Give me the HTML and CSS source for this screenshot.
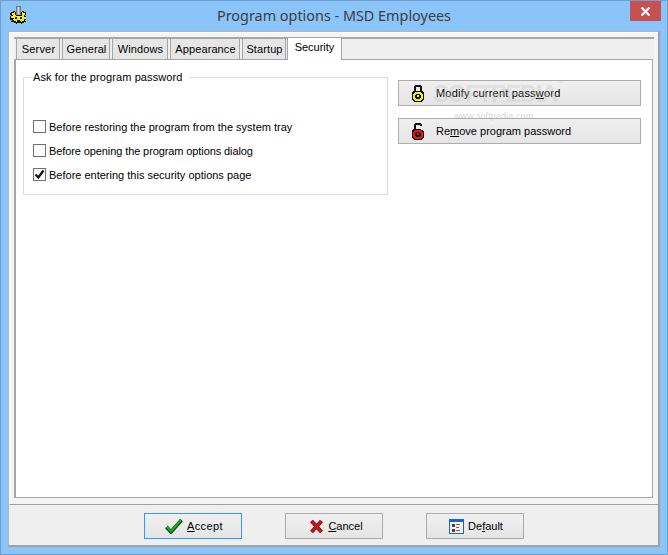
FILE: index.html
```html
<!DOCTYPE html>
<html lang="en">
<head>
<meta charset="utf-8">
<title>Program options - MSD Employees</title>
<link rel="stylesheet" href="styles.css">
</head>
<body>
<div class="window">
  <header class="titlebar">
    <svg class="app-icon" width="17" height="18" viewBox="0 0 17 18" shape-rendering="crispEdges">
      <path fill="#111" d="M1 6h2V5h2v1h1v3h5V6h1V5h2v1h2v3h-1v1h1v4h-1v1h1v1h-2v1h-2v1h-1v-1H7v1H6v-1H4v-1H1v-1h1v-1H0v-4h1V9H0V7h1z"/>
      <path fill="#f4ee16" d="M2 7h2V6h1v3l1 1h5l1-1V6h1v1h2v2h-1v2h2v2h-2v2h-2v1h-1v-1H7v1H6v-1H4v-1H3v-1h1v-1H1v-2h2V9H2z"/>
      <rect x="5" y="11" width="2" height="2" fill="#111"/>
      <rect x="10" y="11" width="2" height="2" fill="#111"/>
      <rect x="7" y="14" width="3" height="1" fill="#111"/>
      <rect x="6" y="0" width="5" height="9" fill="#6f7787"/>
      <rect x="7" y="1" width="3" height="8" fill="#a3abbb"/>
      <rect x="8" y="1" width="1" height="7" fill="#d5d9e2"/>
    </svg>
    <h1 class="title">Program options - MSD Employees</h1>
    <div class="close">
      <svg width="11" height="11" viewBox="0 0 11 11"><path d="M1.5 1.5l8 8M9.5 1.5l-8 8" stroke="#fff" stroke-width="2.2"/></svg>
    </div>
  </header>

  <div class="client">
    <div class="tabarea">
      <nav class="tabs">
        <span class="tab tab-server">Server</span>
        <span class="tab tab-general">General</span>
        <span class="tab tab-windows">Windows</span>
        <span class="tab tab-appearance">Appearance</span>
        <span class="tab tab-startup">Startup</span>
        <span class="tab tab-active">Security</span>
      </nav>
      <section class="panel">
        <fieldset class="group">
          <legend class="legend">Ask for the program password</legend>
          <label class="check"><span class="box"></span>Before restoring the program from the system tray</label>
          <label class="check check-tight"><span class="box"></span>Before opening the program options dialog</label>
          <label class="check"><span class="box">
            <svg width="11" height="11" viewBox="0 0 11 11"><path d="M1.5 5.5l2.8 3L9.5 1.5" fill="none" stroke="#111" stroke-width="2.2"/></svg>
          </span>Before entering this security options page</label>
        </fieldset>
        <div class="actions">
          <button class="btn btn-wide btn-spaced">
            <svg class="lock" width="12" height="17" viewBox="0 0 12 17" shape-rendering="crispEdges">
              <path fill="#111" d="M3 0h6v1h1v5h1v1h1v8h-1v1h-1v1H2v-1H1v-1H0V7h1V6h1V1h1z"/>
              <path fill="#efefef" d="M4 2h4v4H4z"/>
              <path fill="#f4ee16" d="M3 7h6v1h1v1h1v5h-1v1H9v1H3v-1H2v-1H1V9h1V8h1z"/>
              <path fill="#111" d="M4 9h4v1h1v3H8v1H4v-1H3v-3h1z"/>
              <path fill="#f4ee16" d="M5 10h2v2H5z"/>
            </svg>
            <span>Modify current pass<u>w</u>ord</span>
          </button>
          <button class="btn btn-wide">
            <svg class="lock" width="12" height="17" viewBox="0 0 12 17" shape-rendering="crispEdges">
              <path fill="#111" d="M3 0h6v1h1v2H8V2H4v4h5v1h2v1h1v7h-1v1h-1v1H2v-1H1v-1H0V7h1V6h1V1h1z"/>
              <path fill="#e5161a" d="M3 7h6v1h1v1h1v5h-1v1H9v1H3v-1H2v-1H1V9h1V8h1z"/>
              <path fill="#111" d="M4 9h4v1h1v3H8v1H4v-1H3v-3h1z"/>
              <path fill="#e5161a" d="M5 10h2v2H5z"/>
            </svg>
            <span>Re<u>m</u>ove program password</span>
          </button>
        </div>
        <div class="watermark">SOFTPEDIA<span class="tm">™</span></div>
        <div class="watermark-url">www.softpedia.com</div>
      </section>
    </div>
    <footer class="footer">
      <button class="btn btn-foot btn-focus btn-accept">
        <svg width="18" height="16" viewBox="0 0 18 16"><path d="M1.5 9l4.5 5L16.5 2" fill="none" stroke="#0b3c12" stroke-width="3.6"/><path d="M2 9l4 4.4L16 2" fill="none" stroke="#12b51c" stroke-width="2"/></svg>
        <span><u>A</u>ccept</span>
      </button>
      <button class="btn btn-foot btn-cancel">
        <svg width="15" height="15" viewBox="0 0 15 15"><path d="M2.5 2l10 11M12.5 2l-10 11" stroke="#8c0f10" stroke-width="4"/><path d="M2.5 2l10 11M12.5 2l-10 11" stroke="#c8181a" stroke-width="2"/></svg>
        <span><u>C</u>ancel</span>
      </button>
      <button class="btn btn-foot btn-default">
        <svg width="15" height="15" viewBox="0 0 15 15" shape-rendering="crispEdges">
          <rect x="0" y="0" width="15" height="15" fill="#1668c8"/>
          <rect x="1" y="3" width="13" height="11" fill="#f1f5fb"/>
          <rect x="3" y="5" width="3" height="3" fill="#55402f"/>
          <rect x="3" y="10" width="3" height="3" fill="#55402f"/>
          <rect x="7" y="5" width="4" height="1" fill="#d6452c"/>
          <rect x="7" y="8" width="3" height="1" fill="#d6452c"/>
          <rect x="7" y="11" width="4" height="1" fill="#d6452c"/>
        </svg>
        <span>De<u>f</u>ault</span>
      </button>
    </footer>
  </div>
</div>
</body>
</html>
```
FILE: styles.css
```css
* { box-sizing: border-box; }
html, body { margin: 0; padding: 0; }
body { width: 668px; height: 555px; overflow: hidden; font-family: "Liberation Sans", Arial, sans-serif; font-size: 11px; color: #000; }
.window { width: 668px; height: 555px; background: #8bc4f9; border: 1px solid #6f9ecb; display: flex; flex-direction: column; }
.titlebar { height: 30px; flex: none; display: flex; align-items: flex-start; position: relative; }
.app-icon { position: absolute; left: 9px; top: 5px; }
.title { margin: 0; width: 100%; text-align: center; font: 400 14.4px/29px "Noto Sans", sans-serif; color: #3c3c3c; }
.close { position: absolute; right: 6px; top: 0; width: 31px; height: 20px; background: #c75050; display: flex; align-items: center; justify-content: center; }
.client { flex: 1; margin: 0 7px 7px; background: #efefef; border-style: solid; border-width: 1px 2px 2px 1px; border-color: #a9b9c9 #a0a0a0 #a0a0a0 #a9b9c9; display: flex; flex-direction: column; }
.tabarea { height: 473px; flex: none; padding: 4px 5px 0 4px; border-bottom: 1px solid #a0a0a0; background: #f4f4f4; display: flex; flex-direction: column; border-top: 1px solid #fff; border-left: 1px solid #fff; }
.tabs { display: flex; height: 22px; flex: none; gap: 2px; border-top: 2px solid #a6a6a6; align-items: flex-start; background: #efefef; margin-right: -1px; }
.tab { height: 20px; padding-left: 1px; border: 1px solid #a6a6a6; border-width: 0 1px 0 1px; background: #e6e6e6; text-align: center; line-height: 20px; letter-spacing: .1px; flex: none; }
.tab-server { width: 44px; margin-left: 2px; letter-spacing: .2px; }
.tab-general { width: 48px; }
.tab-windows { width: 56px; }
.tab-appearance { width: 70px; }
.tab-startup { width: 44px; margin-right: -1px; }
.tab-active { width: 55px; height: 23px; margin-top: -2px; padding-left: 0; background: #fff; border-width: 1px 1px 0; line-height: 18px; letter-spacing: 0; position: relative; z-index: 1; }
.panel { position: relative; flex: 1; margin-bottom: 6px; background: #fff; border: 1px solid #a6a6a6; border-left-width: 2px; display: flex; padding: 11px 10px 0 7px; gap: 10px; align-items: flex-start; }
.group { width: 365px; height: 124px; margin: 0; padding: 36px 0 0 9px; border: 1px solid #dcdcdc; display: flex; flex-direction: column; gap: 11px; }
.legend { margin-left: 0; padding: 0 6px 0 0; line-height: 13px; letter-spacing: .1px; }
.check { display: flex; align-items: center; height: 13px; gap: 3px; }
.check-tight { letter-spacing: -.1px; }
.box { width: 13px; height: 13px; border: 1px solid #707070; background: #fff; display: flex; align-items: center; justify-content: center; flex: none; }
.actions { display: flex; flex-direction: column; gap: 12px; padding-top: 9px; }
.btn { font: inherit; color: inherit; border: 1px solid #acacac; background: linear-gradient(#f0f0f0, #e5e5e5); height: 26px; padding: 0; display: flex; align-items: center; }
.btn-wide { width: 243px; padding-left: 13px; gap: 12px; }
.btn-spaced { letter-spacing: .2px; }
.btn-foot { width: 98px; justify-content: center; gap: 4px; }
.btn-focus { border-color: #3399ff; }
.btn-accept { letter-spacing: .4px; padding-left: 3px; }
.btn-cancel { padding-left: 5px; }
.btn-default { padding-left: 3px; }
.lock { flex: none; }
.watermark { position: absolute; left: 417px; top: 20px; font-size: 24px; font-weight: 700; letter-spacing: -1.5px; color: rgba(190,190,190,.3); pointer-events: none; }
.tm { font-size: 7px; vertical-align: top; }
.watermark-url { position: absolute; left: 438px; top: 51px; font-size: 9px; letter-spacing: .1px; color: rgba(170,170,170,.5); }
.footer { flex: 1; display: flex; justify-content: center; gap: 43px; align-items: flex-start; padding-top: 8px; }
```
